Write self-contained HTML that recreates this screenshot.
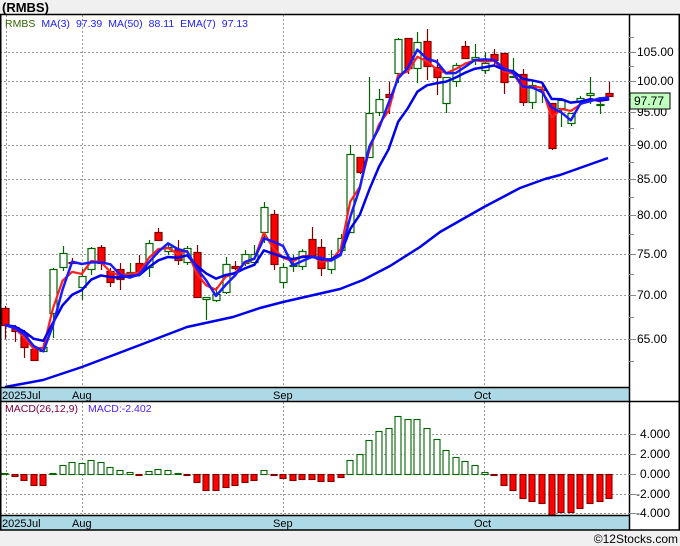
<!DOCTYPE html>
<html><head><meta charset="utf-8"><style>
html,body{margin:0;padding:0;background:#f0f0f0;}
body{width:680px;height:546px;overflow:hidden;font-family:"Liberation Sans",sans-serif;}
svg{display:block}
</style></head><body>
<svg id="c" width="680" height="546" xmlns="http://www.w3.org/2000/svg" font-family="Liberation Sans, sans-serif">
<rect x="0" y="0" width="680" height="546" fill="#f0f0f0"/>
<rect x="0" y="14" width="680" height="516" fill="#fff"/>
<text x="2" y="12" font-size="13" font-weight="bold" fill="#000">(RMBS)</text>
<g id="grid" stroke="#999" stroke-dasharray="2,2" stroke-width="1"></g>
<rect x="0" y="388" width="629" height="13" fill="#add8e6"/>
<rect x="0" y="516" width="629" height="14" fill="#add8e6"/>
<g id="plot"></g>
<g stroke="#000" stroke-width="1.5" fill="none">
<line x1="0" y1="14.5" x2="680" y2="14.5"/>
<line x1="0.75" y1="14" x2="0.75" y2="530"/>
<line x1="629.5" y1="14" x2="629.5" y2="530"/>
<line x1="679.25" y1="14" x2="679.25" y2="530"/>
<line x1="0" y1="387.5" x2="629" y2="387.5"/>
<line x1="0" y1="401.5" x2="680" y2="401.5"/>
<line x1="0" y1="515.5" x2="629" y2="515.5"/>
<line x1="0" y1="530" x2="680" y2="530"/>
</g>
<g font-size="11" fill="#000">
<text x="2" y="399">2025Jul</text><text x="72" y="399">Aug</text><text x="273" y="399">Sep</text><text x="474" y="399">Oct</text>
<text x="2" y="527">2025Jul</text><text x="72" y="527">Aug</text><text x="273" y="527">Sep</text><text x="474" y="527">Oct</text>
</g>
<text x="5" y="27" font-size="10.5"><tspan fill="#336600">RMBS</tspan><tspan fill="#2020ff" dx="6">MA(3)</tspan><tspan fill="#2020ff" dx="6">97.39</tspan><tspan fill="#2020ff" dx="6">MA(50)</tspan><tspan fill="#2020ff" dx="6">88.11</tspan><tspan fill="#2020ff" dx="6">EMA(7)</tspan><tspan fill="#2020ff" dx="6">97.13</tspan></text>
<text x="5" y="412" font-size="10.5"><tspan fill="#800040">MACD(26,12,9)</tspan><tspan fill="#5020ff" dx="10">MACD:-2.402</tspan></text>
<g id="axis" font-size="12" fill="#000"></g>
<rect x="630" y="93" width="40" height="16" fill="#c0ffc0" stroke="#000" stroke-width="1"/>
<text x="634" y="105" font-size="12" fill="#000">97.77</text>
<text x="678" y="543" font-size="12" fill="#000" text-anchor="end">©12Stocks.com</text>
</svg>
<script>
var NS="http://www.w3.org/2000/svg";
function el(p,t,a){var e=document.createElementNS(NS,t);for(var k in a)e.setAttribute(k,a[k]);p.appendChild(e);return e;}
var grid=document.getElementById('grid'),plot=document.getElementById('plot'),axis=document.getElementById('axis');
var pl=[[105,52],[100,81],[95,112],[90,145],[85,179],[80,215],[75,254],[70,295],[65,339]];
pl.forEach(function(p){el(grid,'line',{x1:0,y1:p[1]+.5,x2:629,y2:p[1]+.5});
el(axis,'line',{x1:629,y1:p[1]+.5,x2:636,y2:p[1]+.5,stroke:'#888'});
var t=el(axis,'text',{x:637,y:p[1]+4});t.textContent=p[0].toFixed(2);});
[6,82,283,484].forEach(function(x){el(grid,'line',{x1:x+.5,y1:15,x2:x+.5,y2:387});el(grid,'line',{x1:x+.5,y1:402,x2:x+.5,y2:515});});
[[434,'4.000'],[454,'2.000'],[474,'0.000'],[494,'-2.000'],[513,'-4.000']].forEach(function(p){
el(grid,'line',{x1:0,y1:p[0]+.5,x2:629,y2:p[0]+.5});
el(axis,'line',{x1:629,y1:p[0]+.5,x2:636,y2:p[0]+.5,stroke:'#888'});
var t=el(axis,'text',{x:p[1][0]=='-'?636:640,y:p[0]+4});t.textContent=p[1];});
// minor ticks
[37,66,97,128,162,197,234,274,317,361].forEach(function(y){el(axis,'line',{x1:629,y1:y+.5,x2:634,y2:y+.5,stroke:'#888'});});
// candles: [c(g/r), top, bottom, hi, lo]
var C=[['r',308,325,306,339],['r',327,331,325,342],['r',334,347,330,358],['r',349,360,349,360],['g',347,351,343,352],
['g',269,313,268,338],['g',253,267,246,271],['r',262,263,258,263],['g',276,287,269,300],['g',248,269,247,275],
['r',247,263,245,270],['r',271,282,268,287],['r',269,279,263,290],['g',272,275,263,277],['r',263,272,255,275],
['g',243,267,240,277],['r',232,240,228,241],['g',247,251,243,255],['r',249,260,240,265],['g',248,262,246,265],
['r',252,297,245,298],['g',297,299,297,320],['g',294,300,287,302],['g',264,292,257,294],['r',266,268,261,270],
['g',254,263,250,266],['g',254,262,245,266],['g',207,232,202,243],['r',214,264,210,270],['g',267,282,263,288],
['g',265,266,255,272],['g',251,266,249,270],['r',239,255,227,257],['r',247,268,239,276],['g',259,269,250,274],
['g',238,250,234,252],['g',154,232,145,233],['r',157,172,157,174],['g',113,157,77,157],['g',99,112,89,116],
['r',94,97,82,114],['g',39,73,38,83],['r',38,68,38,74],['g',42,68,32,83],['r',41,66,29,80],
['r',67,77,59,95],['g',77,103,77,113],['g',65,81,63,87],['r',46,58,41,59],['g',57,59,44,65],
['g',63,70,52,74],['r',54,60,49,65],['r',53,82,53,94],['g',76,77,58,78],['r',74,102,69,106],
['g',85,102,81,109],['g',89,90,83,103],['r',103,148,103,150],['g',100,108,100,127],['g',113,123,113,126],
['g',98,101,96,104],['g',93,95,77,104],['g',104,104,98,114],['r',93,96,82,97]];
function X(i){return 5+i*9.59;}
C.forEach(function(c,i){var x=Math.round(X(i));var g=c[0]=='g';
el(plot,'line',{x1:x+.5,y1:c[3],x2:x+.5,y2:c[4],stroke:g?'#006400':'#800000','stroke-width':1.2});
var h=Math.max(c[2]-c[1],1);
el(plot,'rect',{x:x-3,y:c[1]+.5,width:7,height:h,fill:g?'#fff':'#ff0000',stroke:g?'#006400':'#800000','stroke-width':1.2});});
function line(pts,col,w){el(plot,'polyline',{points:pts.map(function(p){return p.join(',')}).join(' '),fill:'none',stroke:col,'stroke-width':w,'stroke-linejoin':'round'});}
// MA50
line([[5,387],[43,380],[82,367],[140,345],[187,327],[233,317],[260,308],[283,302],[340,289],[363,280],[390,266],[420,247],[440,232],[484,207],[520,188],[545,179],[560,175],[608,158]],'#0000ee',2.5);
// closes y
var cl=C.map(function(c){return c[0]=='g'?c[1]:c[2];});
var ema=[],e=cl[0],k=2/8;cl.forEach(function(v,i){e=i?v*k+e*(1-k):v;ema.push([X(i),e]);});
var red=[],r=cl[0],k2=0.5;cl.forEach(function(v,i){r=i?v*k2+r*(1-k2):v;red.push([X(i),r]);});
var ma3=cl.map(function(v,i){var a=cl.slice(Math.max(0,i-2),i+1);return [X(i),a.reduce(function(s,q){return s+q},0)/a.length];});
line(red,'#ff2020',2.2);
line(ema,'#0000ee',2.5);
line(ma3,'#1a1aff',2.5);
// MACD
var M=[0,-0.2,-0.6,-1.1,-1.1,0.05,0.9,1.2,1.1,1.4,1.2,0.7,0.4,0.2,-0.05,0.3,0.5,0.4,0.1,-0.05,-0.8,-1.6,-1.6,-1.3,-1.1,-0.8,-0.6,0.4,-0.1,-0.4,-0.6,-0.5,-0.5,-0.7,-0.7,-0.3,1.4,2.0,3.4,4.3,4.6,5.8,5.5,5.5,4.6,3.5,2.4,1.7,1.3,0.9,0.2,-0.1,-1.1,-1.6,-2.4,-2.7,-2.9,-4.1,-3.8,-3.8,-3.4,-2.9,-2.7,-2.4];
M.forEach(function(v,i){var x=Math.round(X(i));var g=v>=0;var h=Math.max(Math.abs(v)*10,1);
el(plot,'rect',{x:x-3,y:(g?474-h:474)+.5,width:6,height:h,fill:g?'#fff':'#ff0000',stroke:g?'#006400':'#800000','stroke-width':1.1});});
</script>
</body></html>
